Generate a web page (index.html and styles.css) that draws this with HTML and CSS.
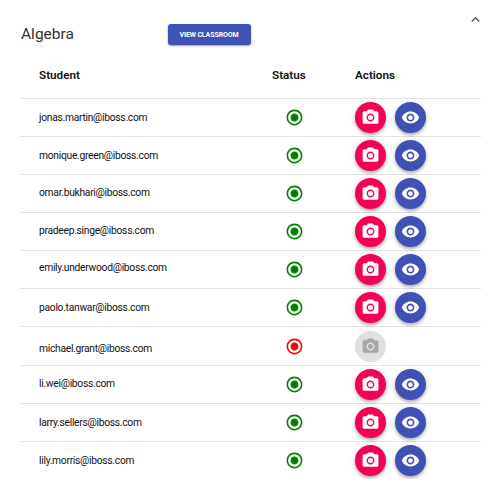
FILE: index.html
```html
<!DOCTYPE html>
<html lang="en">
<head>
<meta charset="utf-8">
<title>Algebra</title>
<link rel="stylesheet" href="styles.css">
</head>
<body>
<svg class="defs" aria-hidden="true">
  <symbol id="camera" viewBox="0 0 24 24"><circle cx="12" cy="12" r="3.2"/><path d="M9 2 7.17 4H4c-1.1 0-2 .9-2 2v12c0 1.1.9 2 2 2h16c1.1 0 2-.9 2-2V6c0-1.1-.9-2-2-2h-3.17L15 2H9zm3 15c-2.76 0-5-2.24-5-5s2.24-5 5-5 5 2.24 5 5-2.24 5-5 5z"/></symbol>
  <symbol id="eye" viewBox="0 0 24 24"><path d="M12 4.500C7 4.500 2.730 7.610 1 12c1.730 4.390 6 7.500 11 7.500s9.270-3.110 11-7.500c-1.730-4.390-6-7.500-11-7.500zM12 17c-2.760 0-5-2.240-5-5s2.240-5 5-5 5 2.240 5 5-2.240 5-5 5zm0-8c-1.660 0-3 1.340-3 3s1.340 3 3 3 3-1.340 3-3-1.340-3-3-3z"/></symbol>
  <symbol id="radio" viewBox="0 0 24 24"><path d="M12 7c-2.760 0-5 2.240-5 5s2.240 5 5 5 5-2.240 5-5-2.240-5-5-5zm0-5C6.480 2 2 6.480 2 12s4.480 10 10 10 10-4.480 10-10S17.520 2 12 2zm0 18c-4.420 0-8-3.580-8-8s3.580-8 8-8 8 3.580 8 8-3.580 8-8 8z"/></symbol>
</svg>
<main class="panel">
  <header class="top">
    <h1 class="title">Algebra</h1>
    <button class="view">VIEW CLASSROOM</button>
    <svg class="chevron" viewBox="0 0 24 24"><path d="M12 8l-6 6 1.410 1.410L12 10.830l4.590 4.580L18 14z"/></svg>
  </header>
  <div class="row head"><span>Student</span><span>Status</span><span>Actions</span></div>
  <div class="row"><span class="email">jonas.martin@iboss.com</span><svg class="status"><use href="#radio"/></svg><div class="actions"><button class="fab photo"><svg><use href="#camera"/></svg></button><button class="fab watch"><svg><use href="#eye"/></svg></button></div></div>
  <div class="row"><span class="email">monique.green@iboss.com</span><svg class="status"><use href="#radio"/></svg><div class="actions"><button class="fab photo"><svg><use href="#camera"/></svg></button><button class="fab watch"><svg><use href="#eye"/></svg></button></div></div>
  <div class="row"><span class="email raised">omar.bukhari@iboss.com</span><svg class="status"><use href="#radio"/></svg><div class="actions"><button class="fab photo"><svg><use href="#camera"/></svg></button><button class="fab watch"><svg><use href="#eye"/></svg></button></div></div>
  <div class="row"><span class="email raised">pradeep.singe@iboss.com</span><svg class="status"><use href="#radio"/></svg><div class="actions"><button class="fab photo"><svg><use href="#camera"/></svg></button><button class="fab watch"><svg><use href="#eye"/></svg></button></div></div>
  <div class="row"><span class="email high">emily.underwood@iboss.com</span><svg class="status"><use href="#radio"/></svg><div class="actions"><button class="fab photo"><svg><use href="#camera"/></svg></button><button class="fab watch"><svg><use href="#eye"/></svg></button></div></div>
  <div class="row"><span class="email">paolo.tanwar@iboss.com</span><svg class="status"><use href="#radio"/></svg><div class="actions"><button class="fab photo"><svg><use href="#camera"/></svg></button><button class="fab watch"><svg><use href="#eye"/></svg></button></div></div>
  <div class="row offline"><span class="email low">michael.grant@iboss.com</span><svg class="status"><use href="#radio"/></svg><div class="actions"><button class="fab photo" disabled><svg><use href="#camera"/></svg></button></div></div>
  <div class="row"><span class="email raised">li.wei@iboss.com</span><svg class="status"><use href="#radio"/></svg><div class="actions"><button class="fab photo"><svg><use href="#camera"/></svg></button><button class="fab watch"><svg><use href="#eye"/></svg></button></div></div>
  <div class="row"><span class="email">larry.sellers@iboss.com</span><svg class="status"><use href="#radio"/></svg><div class="actions"><button class="fab photo"><svg><use href="#camera"/></svg></button><button class="fab watch"><svg><use href="#eye"/></svg></button></div></div>
  <div class="row"><span class="email">lily.morris@iboss.com</span><svg class="status"><use href="#radio"/></svg><div class="actions"><button class="fab photo"><svg><use href="#camera"/></svg></button><button class="fab watch"><svg><use href="#eye"/></svg></button></div></div>
</main>
</body>
</html>
```
FILE: styles.css
```css
* { box-sizing: border-box; }
body {
  margin: 0;
  background: #fff;
  color: #111;
  font-family: Roboto, "Liberation Sans", sans-serif;
}
.defs { display: block; width: 0; height: 0; }
svg { fill: currentColor; flex: none; }
button { border: 0; padding: 0; font-family: inherit; }
.panel { width: 461px; margin-left: 20px; }
.top {
  display: grid;
  grid-template-columns: 147.500px 83px 1fr;
  height: 50px;
  align-items: start;
}
.title {
  margin: 25px 0 0 1px;
  font-size: 15.500px;
  line-height: 19px;
  font-weight: 400;
  color: #333;
}
.view {
  height: 21px;
  margin-top: 24px;
  border-radius: 3px;
  background: #3f51b5;
  color: #fff;
  font-size: 7px;
  font-weight: 700;
  line-height: 20px;
  letter-spacing: -.1px;
  white-space: nowrap;
  box-shadow: 0 1px 2px rgba(0, 0, 0, .4);
}
.chevron {
  width: 17px;
  height: 17px;
  margin: 11px -3px 0 0;
  justify-self: end;
  color: #555;
}
.row {
  display: grid;
  grid-template-columns: 246px 88px 1fr;
  align-items: center;
  height: 38px;
  padding-left: 19px;
  border-top: 1px solid #e2e2e2;
}
.row.head {
  grid-template-columns: 233px 83px 1fr;
  height: 48px;
  padding-top: 2px;
  border-top: 0;
  font-size: 11.700px;
  font-weight: 600;
}
.row.offline { height: 39px; }
.email {
  padding-top: 1px;
  font-size: 10.300px;
  line-height: 14px;
  letter-spacing: -.29px;
  white-space: nowrap;
}
.raised { padding-bottom: 2px; }
.high { padding-bottom: 4px; }
.low { padding-top: 5px; }
.status { width: 19px; height: 19px; color: #008000; }
.offline .status { color: #f00; }
.actions { display: flex; gap: 9px; margin-left: -18px; }
.fab {
  display: flex;
  align-items: center;
  justify-content: center;
  width: 31px;
  height: 31px;
  border-radius: 50%;
  color: #fff;
  box-shadow: 0 2px 3px rgba(0, 0, 0, .25), 0 1px 6px rgba(0, 0, 0, .12);
}
.fab svg { width: 19px; height: 19px; }
.photo { background: #f50057; }
.watch { background: #3f51b5; }
.fab:disabled { background: #e0e0e0; color: #a6a6a6; box-shadow: none; }
```
